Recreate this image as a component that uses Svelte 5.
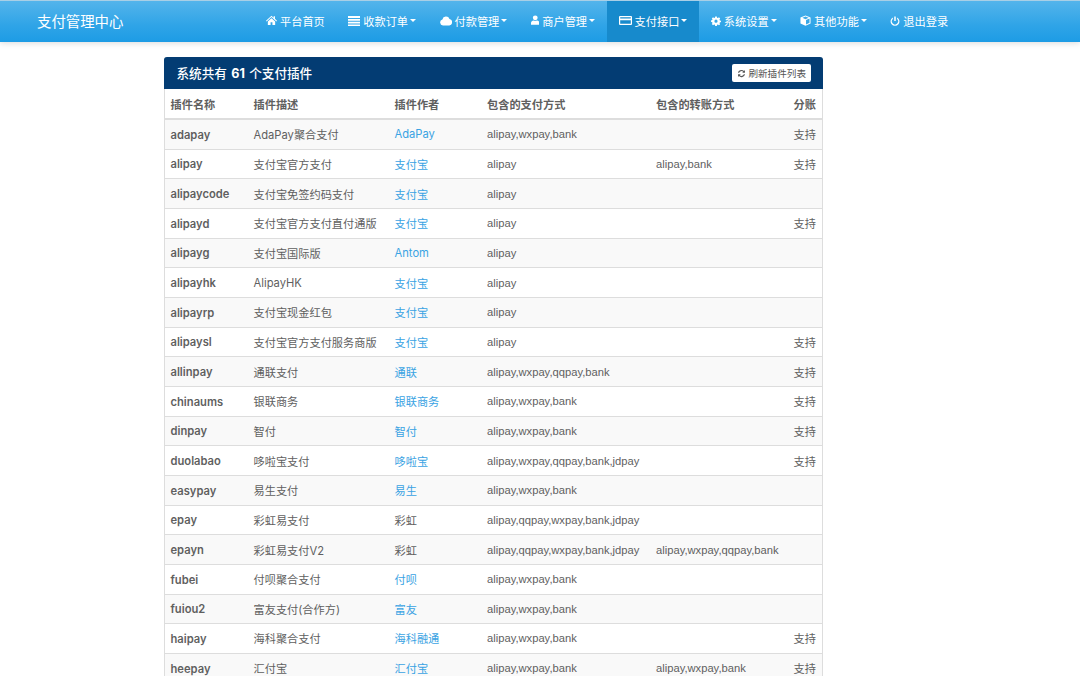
<script>
    // one row per plugin: name, description, author, author link?, pay types, transfer types, split
    const plugins = [
        ["adapay", "AdaPay聚合支付", "AdaPay", true, "alipay,wxpay,bank", "", "支持"],
        ["alipay", "支付宝官方支付", "支付宝", true, "alipay", "alipay,bank", "支持"],
        ["alipaycode", "支付宝免签约码支付", "支付宝", true, "alipay", "", ""],
        ["alipayd", "支付宝官方支付直付通版", "支付宝", true, "alipay", "", "支持"],
        ["alipayg", "支付宝国际版", "Antom", true, "alipay", "", ""],
        ["alipayhk", "AlipayHK", "支付宝", true, "alipay", "", ""],
        ["alipayrp", "支付宝现金红包", "支付宝", true, "alipay", "", ""],
        ["alipaysl", "支付宝官方支付服务商版", "支付宝", true, "alipay", "", "支持"],
        ["allinpay", "通联支付", "通联", true, "alipay,wxpay,qqpay,bank", "", "支持"],
        ["chinaums", "银联商务", "银联商务", true, "alipay,wxpay,bank", "", "支持"],
        ["dinpay", "智付", "智付", true, "alipay,wxpay,bank", "", "支持"],
        ["duolabao", "哆啦宝支付", "哆啦宝", true, "alipay,wxpay,qqpay,bank,jdpay", "", "支持"],
        ["easypay", "易生支付", "易生", true, "alipay,wxpay,bank", "", ""],
        ["epay", "彩虹易支付", "彩虹", false, "alipay,qqpay,wxpay,bank,jdpay", "", ""],
        ["epayn", "彩虹易支付V2", "彩虹", false, "alipay,qqpay,wxpay,bank,jdpay", "alipay,wxpay,qqpay,bank", ""],
        ["fubei", "付呗聚合支付", "付呗", true, "alipay,wxpay,bank", "", ""],
        ["fuiou2", "富友支付(合作方)", "富友", true, "alipay,wxpay,bank", "", ""],
        ["haipay", "海科聚合支付", "海科融通", true, "alipay,wxpay,bank", "", "支持"],
        ["heepay", "汇付宝", "汇付宝", true, "alipay,wxpay,bank", "alipay,wxpay,bank", "支持"]
    ];

    // w, h, view: the icons are not all one width, as in an icon font
    const navItems = [
        { label: "平台首页", icon: "home", w: 11, h: 11, view: "0 0 12 12" },
        { label: "收款订单", icon: "list", w: 12, h: 12, view: "0 0 12 12", caret: true },
        { label: "付款管理", icon: "cloud", w: 12, h: 12, view: "0 0 12 12", caret: true },
        { label: "商户管理", icon: "user", w: 8.5, h: 10.2, view: "1 0 10 12", caret: true },
        { label: "支付接口", icon: "card", w: 13, h: 11, view: "0 0 13 11", caret: true, active: true },
        { label: "系统设置", icon: "cog", w: 10, h: 10, view: "0 0 12 12", caret: true },
        { label: "其他功能", icon: "cube", w: 11, h: 11, view: "0 0 12 12", caret: true },
        { label: "退出登录", icon: "power", w: 10, h: 10, view: "0 0 12 12" }
    ];

    const iconPaths = {
        home: "M6 .8 0 6.200l.7.8L6 2.300 11.300 7l.7-.8L9.800 4.200V1.300H8.300v1.600ZM2 7.200V11h3V8h2v3h3V7.200L6 3.600Z",
        list: "M0 1h12v2H0ZM0 4h12v1.700H0ZM0 6.700h12v1.700H0ZM0 9.400h12V11H0Z",
        cloud: "M3 10.500a3 3 0 0 1-.6-5.900 3.700 3.700 0 0 1 7.100-.6A3.300 3.300 0 0 1 9.300 10.500Z",
        user: "M6 .5a2.800 2.800 0 0 1 0 5.700A2.800 2.800 0 0 1 6 .5ZM1 11.500V9.300C1 7.800 2.500 6.700 4 6.500c1.300.7 2.700.7 4 0 1.500.2 3 1.300 3 2.800v2.200Z",
        card: "M1 1h11a1 1 0 0 1 1 1v7a1 1 0 0 1-1 1H1a1 1 0 0 1-1-1V2a1 1 0 0 1 1-1Zm.2 1.200v1.300h10.600V2.200Zm0 3v3.600h10.600V5.200Z",
        cog: "M5 .5h2l.3 1.500 1 .4L9.600 1.600 11 3l-.8 1.300.4 1 1.400.4v1.600l-1.400.4-.4 1 .8 1.300L9.600 11l-1.300-.8-1 .4L7 12H5l-.3-1.400-1-.4L2.400 11 1 9.700l.8-1.300-.4-1L0 7V5.300l1.400-.4.4-1L1 2.900 2.400 1.600l1.300.8 1-.4ZM6 4.300a1.900 1.900 0 1 0 0 3.800 1.900 1.900 0 0 0 0-3.800Z",
        cube: "M6 .5 11.500 2.800v6.400L6 11.800.5 9.200V2.800ZM6 1.700 2.600 3.100 6 4.500l3.400-1.400ZM6.600 5.500v4.800l3.800-1.800V3.900Z",
        power: "M5.100.5h1.800v5.500H5.100ZM3.500 1.800v1.900a3.700 3.700 0 1 0 5 0V1.800a5.300 5.300 0 1 1-5 0Z",
        refresh: "M6 1.200a4.800 4.800 0 0 1 3.400 1.400L10.600 1.400V5H7l1.300-1.300A3.300 3.300 0 0 0 2.900 5H1.300A4.800 4.800 0 0 1 6 1.200ZM1.400 7H5L3.700 8.300A3.300 3.300 0 0 0 9.100 7h1.600a4.800 4.800 0 0 1-8.100 2.400L1.400 10.600Z"
    };
</script>

<div class="page">
    <nav class="navbar">
        <span class="brand">支付管理中心</span>
        <ul class="nav">
            {#each navItems as item}
                <li class:active={item.active}>
                    <svg class="icon" viewBox={item.view} style="width: {item.w}px; height: {item.h}px"><path fill-rule="evenodd" d={iconPaths[item.icon]} /></svg>
                    <span>{item.label}</span>
                    {#if item.caret}<i class="caret"></i>{/if}
                </li>
            {/each}
        </ul>
    </nav>

    <main class="panel">
        <div class="panel-heading">
            <span class="title">系统共有 <b>61</b> 个支付插件</span>
            <span class="btn">
                <svg class="icon" viewBox="0 0 12 12"><path d={iconPaths.refresh} /></svg>
                刷新插件列表
            </span>
        </div>
        <table>
            <colgroup>
                <col style="width: 83px" />
                <col style="width: 141px" />
                <col style="width: 92.5px" />
                <col style="width: 169px" />
                <col style="width: 137.5px" />
                <col />
            </colgroup>
            <thead>
                <tr>
                    <th>插件名称</th>
                    <th>插件描述</th>
                    <th>插件作者</th>
                    <th>包含的支付方式</th>
                    <th>包含的转账方式</th>
                    <th>分账</th>
                </tr>
            </thead>
            <tbody>
                {#each plugins as [name, desc, author, linked, pay, transfer, split]}
                    <tr>
                        <td class="name"><span>{name}</span></td>
                        <td>{desc}</td>
                        <td>
                            {#if linked}<span class="link">{author}</span>{:else}{author}{/if}
                        </td>
                        <td class="types">{pay}</td>
                        <td class="types">{transfer}</td>
                        <td>{split}</td>
                    </tr>
                {/each}
            </tbody>
        </table>
    </main>
</div>

<style>
    :global(body) {
        margin: 0;
        background: #fff;
    }

    .page {
        height: 676px;
        overflow: hidden;
        font-family: Inter, "Noto Sans CJK SC", sans-serif;
        font-size: 11.2px;
        color: #5f5f5f;
    }

    .navbar {
        display: flex;
        align-items: center;
        height: 42px;
        padding-left: 37px;
        background: linear-gradient(#54b4eb, #2fa4e7 60%, #1d9ce5);
        border-top: 1px solid #a9cfe6;
        box-sizing: border-box;
        box-shadow: 0 1px 6px rgba(0, 0, 0, 0.15);
        color: #fff;
    }

    .brand {
        font-size: 14.4px;
        margin-top: -3px;
        width: 217.25px;
    }

    .nav {
        display: flex;
        align-self: stretch;
        list-style: none;
        margin: 0;
        padding: 0;
    }

    .nav li {
        display: flex;
        align-items: center;
        gap: 3px;
        padding: 0 11.75px 2px;
    }

    .nav li.active {
        background: #178acc;
    }

    .icon {
        width: 11px;
        height: 11px;
        fill: currentColor;
        flex: none;
    }

    .caret {
        width: 0;
        height: 0;
        margin-left: -1px;
        border-top: 3.1px solid #fff;
        border-left: 3.1px solid transparent;
        border-right: 3.1px solid transparent;
    }

    .panel {
        width: 659px;
        box-sizing: border-box;
        margin: 15px 0 0 164px;
        border: 1px solid #ddd;
        border-top: 0;
        border-radius: 3px 3px 0 0;
    }

    .panel-heading {
        display: flex;
        align-items: center;
        justify-content: space-between;
        height: 32px;
        margin: 0 -1px;
        padding: 0 12px 0 12.5px;
        background: #033c73;
        border-radius: 3px 3px 0 0;
        color: #fff;
    }

    .title {
        margin-top: -2px;
        font-size: 12.6px;
        font-weight: 500;
        word-spacing: 1px;
    }

    .title b {
        font-weight: 700;
    }

    .btn {
        display: flex;
        align-items: center;
        gap: 2px;
        height: 18px;
        padding: 0 5px;
        background: #fff;
        border-radius: 2px;
        font-size: 9.6px;
        color: #555;
    }

    .btn .icon {
        width: 9px;
        height: 9px;
    }

    table {
        width: 100%;
        table-layout: fixed;
        border-collapse: collapse;
    }

    th {
        height: 29px;
        padding: 0 0 0 5.5px;
        text-align: left;
        font-weight: 700;
        border-bottom: 2px solid #ddd;
    }

    td {
        height: 28.67px;
        padding: 0 0 0 5.5px;
        border-top: 1px solid #ddd;
        white-space: nowrap;
    }

    td.types {
        font-family: "Liberation Sans", sans-serif;
    }

    td.name {
        font-weight: 600;
    }

    td.name span {
        display: block;
        margin-top: 1px;
        line-height: 14px;
    }

    tbody tr:nth-child(odd) {
        background: #f9f9f9;
    }

    .link {
        color: #3aa3e3;
    }
</style>
